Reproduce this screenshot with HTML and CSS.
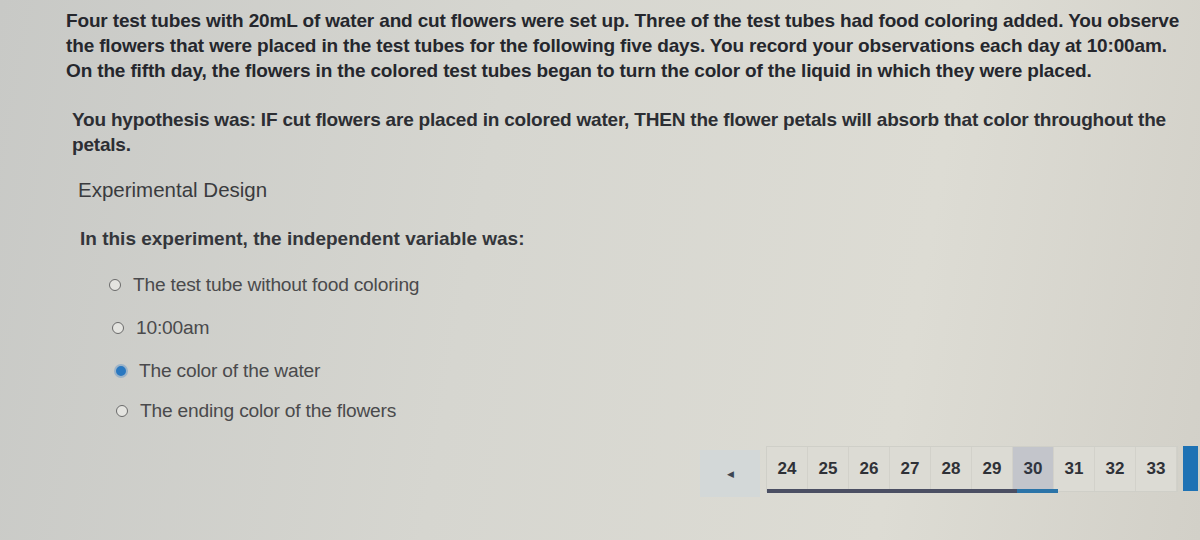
FILE: index.html
```html
<!DOCTYPE html>
<html>
<head>
<meta charset="utf-8">
<link rel="stylesheet" href="styles.css">
</head>
<body>
<div class="page">
  <p class="intro">Four test tubes with 20mL of water and cut flowers were set up. Three of the test tubes had food coloring added. You observe<br>the flowers that were placed in the test tubes for the following five days. You record your observations each day at 10:00am.<br>On the fifth day, the flowers in the colored test tubes began to turn the color of the liquid in which they were placed.</p>
  <p class="hypo">You hypothesis was: IF cut flowers are placed in colored water, THEN the flower petals will absorb that color throughout the<br>petals.</p>
  <h2 class="design">Experimental Design</h2>
  <p class="question">In this experiment, the independent variable was:</p>
  <ul class="options">
    <li class="opt o1"><span class="radio"></span>The test tube without food coloring</li>
    <li class="opt o2"><span class="radio"></span>10:00am</li>
    <li class="opt o3"><span class="radio checked"></span>The color of the water</li>
    <li class="opt o4"><span class="radio"></span>The ending color of the flowers</li>
  </ul>
  <div class="pager">
    <div class="prev">&#9664;</div>
    <div class="pages">
      <span class="pg">24</span><span class="pg">25</span><span class="pg">26</span><span class="pg">27</span><span class="pg">28</span><span class="pg">29</span><span class="pg current">30</span><span class="pg">31</span><span class="pg">32</span><span class="pg">33</span>
      <div class="progress"><div class="done"></div><div class="now"></div></div>
    </div>
    <div class="next"></div>
  </div>
</div>
</body>
</html>
```
FILE: styles.css
```css
html, body {
  margin: 0;
  padding: 0;
}
body {
  width: 1200px;
  height: 540px;
  overflow: hidden;
  font-family: "Liberation Sans", Arial, sans-serif;
  background: linear-gradient(100deg, #c8c9c6 0%, #d6d6d0 40%, #dddcd4 75%, #d2d0c8 100%);
  color: #2b2d33;
}
.page {
  padding-top: 8px;
}
.intro {
  margin: 0 0 0 66px;
  font-size: 19px;
  font-weight: bold;
  line-height: 25px;
  letter-spacing: -0.15px;
  color: #25272d;
}
.hypo {
  margin: 24px 0 0 72px;
  font-size: 19px;
  font-weight: bold;
  line-height: 25px;
  letter-spacing: -0.2px;
  color: #2c2e33;
}
.design {
  margin: 20px 0 0 78px;
  font-size: 20.5px;
  font-weight: normal;
  line-height: 26px;
  color: #3a3b3e;
}
.question {
  margin: 23px 0 0 80px;
  font-size: 19px;
  font-weight: bold;
  line-height: 26px;
  color: #34363b;
}
.options {
  list-style: none;
  margin: 12px 0 0 0;
  padding: 0;
}
.opt {
  display: flex;
  align-items: center;
  height: 42px;
  font-size: 19.2px;
  color: #4a4a4c;
  letter-spacing: -0.2px;
}
.o1 { margin-left: 109px; }
.o2 { margin-left: 112px; height: 44px; }
.o3 { margin-left: 114px; }
.o4 { margin-left: 116px; height: 38px; }
.radio {
  width: 12px;
  height: 12px;
  border: 1.5px solid #6a6a6a;
  border-radius: 50%;
  margin-right: 12px;
  box-sizing: border-box;
  background: #e4e4e0;
}
.radio.checked {
  width: 14px;
  height: 14px;
  border: 2.5px solid #9cb3c8;
  background: #2a78c0;
  margin-right: 11px;
}
.pager {
  display: flex;
  align-items: flex-start;
  margin: 16px 0 0 700px;
}
.prev {
  width: 60px;
  height: 47px;
  background: #d3d8d8;
  color: #3d4652;
  font-size: 9px;
  display: flex;
  align-items: center;
  justify-content: center;
  margin-top: 4px;
}
.pages {
  position: relative;
  display: flex;
  margin-left: 6px;
  height: 44px;
  border: 1px solid #cfcfc8;
  background: #dcdbd4;
}
.pg {
  width: 41px;
  height: 44px;
  display: flex;
  align-items: center;
  justify-content: center;
  font-size: 17px;
  font-weight: bold;
  color: #2f3137;
  border-right: 1px solid #d2d1ca;
  box-sizing: border-box;
}
.pg.current {
  background: #c3c5cb;
  color: #303540;
}
.progress {
  position: absolute;
  left: 0;
  top: 42px;
  display: flex;
  height: 4px;
}
.done {
  width: 250px;
  background: #4b4f63;
}
.now {
  width: 41px;
  background: #2b74a8;
}
.next {
  width: 15px;
  height: 45px;
  background: #1e72b4;
  margin-left: 5px;
}
```
